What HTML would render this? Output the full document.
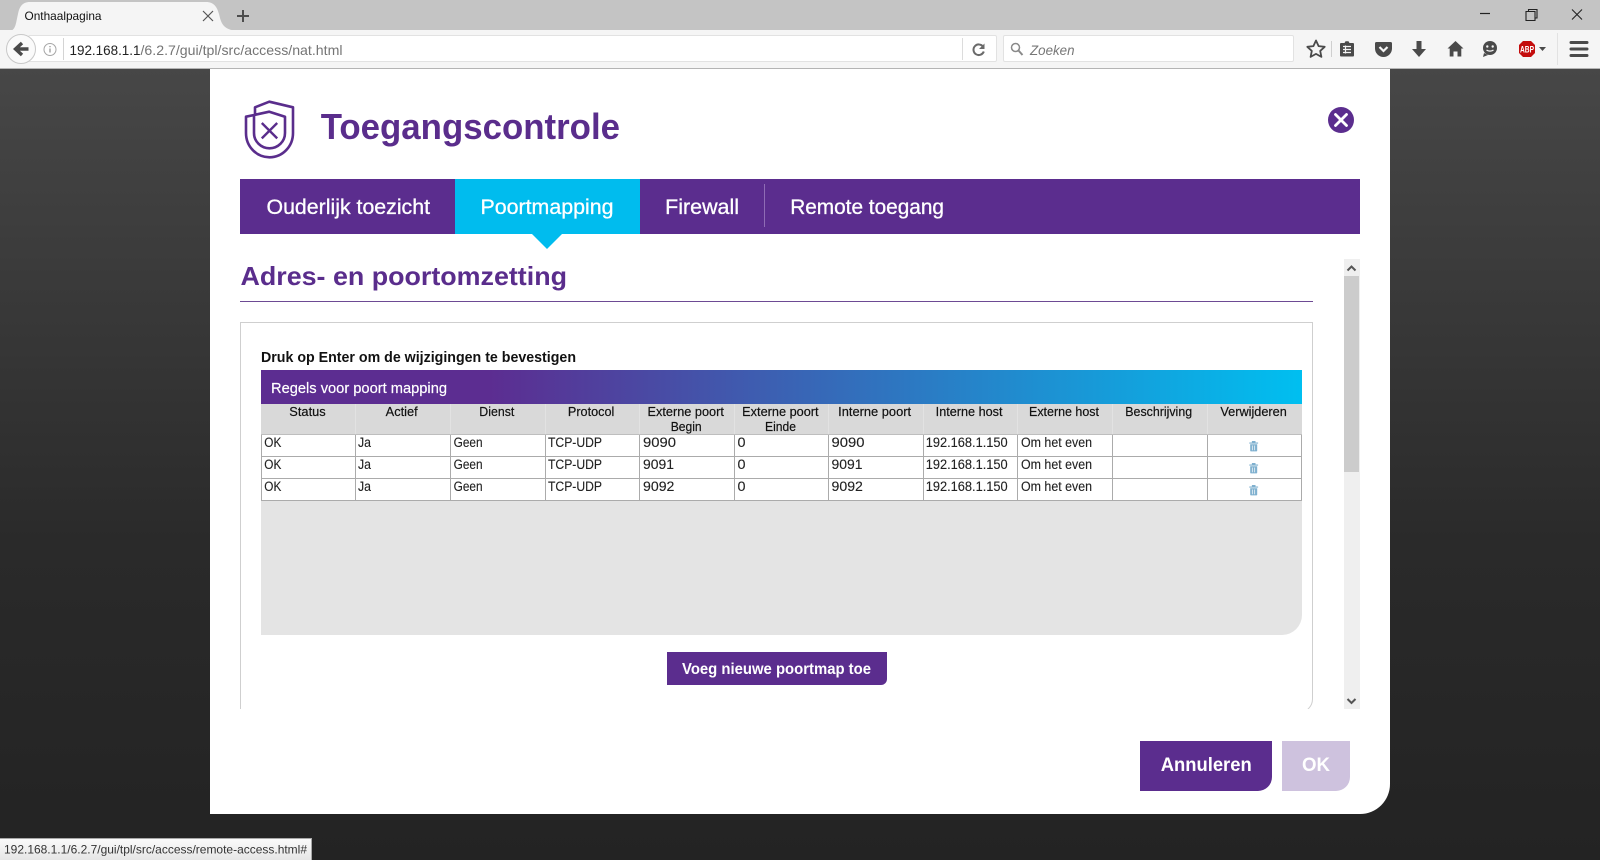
<!DOCTYPE html>
<html lang="nl"><head><meta charset="utf-8"><title>Onthaalpagina</title>
<style>
html,body{margin:0;padding:0;width:1600px;height:860px;overflow:hidden;background:#232323}
body{position:relative;font-family:"Liberation Sans",sans-serif}
div{position:absolute;box-sizing:border-box}
#bg{left:0;top:68px;width:1600px;height:792px;background:linear-gradient(#474747 0,#2a2a2a 60%,#232323 100%)}
#tabs{left:0;top:0;width:1600px;height:30px;background:#c4c4c4}
#nav{left:0;top:30px;width:1600px;height:39px;background:#f5f5f5;border-bottom:1px solid #b4b4b4}
#addr{left:28px;top:35px;width:969px;height:27px;background:#fff;border:1px solid #e2e2e2;border-radius:2px}
#search{left:1003px;top:35px;width:291px;height:27px;background:#fff;border:1px solid #e2e2e2;border-radius:2px}
#back{left:6px;top:34px;width:30px;height:30px;border-radius:50%;background:#fafafa;border:1px solid #c8c8c8}
#modal{left:210px;top:69px;width:1180px;height:745px;background:#fff;border-radius:0 0 30px 0}
#tabbar{left:240px;top:179px;width:1120px;height:55px;background:#5b2d8e}
#active{left:455px;top:179px;width:185px;height:55px;background:#00bcee}
#tsep{left:764px;top:184px;width:1px;height:43px;background:#8f6cb5}
#arrow{left:532px;top:234px;width:0;height:0;border-left:15px solid transparent;border-right:15px solid transparent;border-top:15px solid #00bcee}
#hr{left:240px;top:301px;width:1073px;height:1px;background:#6d4a94}
#clip{left:240px;top:322px;width:1073px;height:387px;overflow:hidden}
#box{left:0;top:0;width:1073px;height:391px;border:1px solid #cfcfcf;border-radius:0 0 14px 0;background:#fff}
#band{left:261px;top:370px;width:1041px;height:34px;background:linear-gradient(90deg,#5c2d91 0,#5c2d91 22%,#00bff0 100%)}
#panel{left:261px;top:404px;width:1041px;height:231px;background:#e4e4e4;border-radius:0 0 20px 0}
#head{left:261px;top:404px;width:1041px;height:31px;background:#d9d9d9}
.v{width:1px;background:#e2e2e2;top:404px;height:31px}
.l{background:#ababab}
#cells{left:261px;top:435px;width:1041px;height:66px;background:#fff}
#scroll{left:1344px;top:259px;width:16px;height:450px;background:#efefef}
#thumb{left:1344px;top:276px;width:15px;height:196px;background:#ccc}
#add{left:667px;top:652px;width:220px;height:33px;background:#5b2d8e;border-radius:0 0 6px 0}
#cancel{left:1140px;top:741px;width:132px;height:50px;background:#5b2d8e;border-radius:0 0 14px 0}
#ok{left:1282px;top:741px;width:68px;height:50px;background:#cec2de;border-radius:0 0 14px 0}
#status{left:0;top:838px;width:312px;height:22px;background:linear-gradient(#fafafa,#e6e6e6);border-top:1px solid #a8a8a8;border-right:1px solid #a8a8a8}
svg#s{position:absolute;left:0;top:0}
.tb{fill:#fff;font-size:21px;stroke:#fff;stroke-width:.3px}
.h{fill:#111;font-size:12.5px;stroke:#111;stroke-width:.18px}
.c{fill:#222;font-size:13.5px;stroke:#222;stroke-width:.12px}
.pu{fill:#5a2d8c;font-weight:bold}
.ic{fill:#4a4a4a}
</style></head><body>
<div id="bg"></div>
<div id="tabs"></div><div id="nav"></div>
<svg style="position:absolute;left:0;top:0" width="260" height="32"><path d="M10 31C16 30 16 22 18 14C19.500 7 22 2 30 2H206C214 2 217 7 219 14C221 22 222 30 238 31Z" fill="#f5f5f5"/></svg>
<div id="addr"></div><div id="search"></div><div id="back"></div>
<div id="modal"></div>
<div id="tabbar"></div><div id="active"></div><div id="tsep"></div><div id="arrow"></div>
<div id="hr"></div>
<div id="clip"><div id="box"></div></div>
<div id="band"></div><div id="panel"></div><div id="head"></div><div id="cells"></div>
<div class="v" style="left:355px"></div><div class="v" style="left:450px"></div><div class="v" style="left:545px"></div><div class="v" style="left:639px"></div><div class="v" style="left:734px"></div><div class="v" style="left:828px"></div><div class="v" style="left:923px"></div><div class="v" style="left:1017px"></div><div class="v" style="left:1112px"></div><div class="v" style="left:1207px"></div>
<div class="l" style="left:261px;top:434px;width:1041px;height:1px;opacity:.6"></div>
<div class="l" style="left:261px;top:456px;width:1041px;height:1px"></div>
<div class="l" style="left:261px;top:478px;width:1041px;height:1px"></div>
<div class="l" style="left:261px;top:500px;width:1041px;height:1px"></div>
<div class="l" style="left:261px;top:435px;width:1px;height:66px"></div>
<div class="l" style="left:355px;top:435px;width:1px;height:66px"></div>
<div class="l" style="left:450px;top:435px;width:1px;height:66px"></div>
<div class="l" style="left:545px;top:435px;width:1px;height:66px"></div>
<div class="l" style="left:639px;top:435px;width:1px;height:66px"></div>
<div class="l" style="left:734px;top:435px;width:1px;height:66px"></div>
<div class="l" style="left:828px;top:435px;width:1px;height:66px"></div>
<div class="l" style="left:923px;top:435px;width:1px;height:66px"></div>
<div class="l" style="left:1017px;top:435px;width:1px;height:66px"></div>
<div class="l" style="left:1112px;top:435px;width:1px;height:66px"></div>
<div class="l" style="left:1207px;top:435px;width:1px;height:66px"></div>
<div class="l" style="left:1301px;top:435px;width:1px;height:66px"></div>
<div id="scroll"></div><div id="thumb"></div>
<div id="add"></div><div id="cancel"></div><div id="ok"></div>
<div id="status"></div>
<svg id="s" width="1600" height="860" viewBox="0 0 1600 860" xmlns="http://www.w3.org/2000/svg" font-family="'Liberation Sans',sans-serif">
<!-- chrome -->
<text x="24.500" y="20" font-size="12" fill="#111" textLength="77" lengthAdjust="spacingAndGlyphs">Onthaalpagina</text>
<path d="M203 11l10 10M213 11l-10 10" stroke="#555" stroke-width="1.200" fill="none"/>
<path d="M243 10v12M237 16h12" stroke="#4d4d4d" stroke-width="2" fill="none"/>
<path d="M1480 13.500h10" stroke="#222" stroke-width="1.200"/>
<path d="M1526 11.500h9v9h-9zM1528.500 11.500v-2h8.500v8.500h-2" stroke="#222" stroke-width="1.100" fill="none"/>
<path d="M1572 9.500l10 10M1582 9.500l-10 10" stroke="#222" stroke-width="1.100" fill="none"/>
<path d="M28.500 49H17M22 43l-6.500 6 6.500 6" stroke="#4a4a4a" stroke-width="3.400" fill="none"/>
<circle cx="50" cy="49.500" r="6" fill="none" stroke="#a6a6a6" stroke-width="1"/><path d="M50 48.500v4M50 46v1.200" stroke="#999" stroke-width="1.300"/>
<path d="M63.500 38v22" stroke="#d4d4d4"/>
<text x="69.500" y="55" font-size="14" fill="#222" textLength="71" lengthAdjust="spacingAndGlyphs">192.168.1.1</text>
<text x="140.500" y="55" font-size="14" fill="#757575" textLength="202" lengthAdjust="spacingAndGlyphs">/6.2.7/gui/tpl/src/access/nat.html</text>
<path d="M962.500 38v22" stroke="#dcdcdc"/>
<path d="M983 46.500a5.300 5.300 0 1 0 .8 5" stroke="#6a6a6a" stroke-width="2" fill="none"/><path d="M984.500 43.500v5.500h-5.500z" fill="#6a6a6a"/>
<circle cx="1015.500" cy="47.500" r="4" fill="none" stroke="#8a8a8a" stroke-width="1.500"/><path d="M1018.500 50.500l4 4.500" stroke="#8a8a8a" stroke-width="2"/>
<text x="1030" y="55" font-size="14" font-style="italic" fill="#777" textLength="44.500" lengthAdjust="spacingAndGlyphs">Zoeken</text>
<path d="M1316 40.500l2.600 5.600 6.100.7-4.500 4.100 1.200 6-5.400-3-5.400 3 1.200-6-4.500-4.100 6.100-.7z" fill="none" stroke="#4a4a4a" stroke-width="1.800" stroke-linejoin="round"/>
<path d="M1331.500 41v16" stroke="#cfcfcf"/>
<path class="ic" d="M1341 43h3.500l1-1.800h3l1 1.800h3.500a1 1 0 0 1 1 1v11.500a1 1 0 0 1-1 1H1341a1 1 0 0 1-1-1V44a1 1 0 0 1 1-1z"/>
<path d="M1343 46.500h8M1343 49.500h8M1343 52.500h8M1345.500 45.500v8" stroke="#f5f5f5" stroke-width="1.200"/>
<path class="ic" d="M1376.500 42h14a1.500 1.500 0 0 1 1.500 1.500v5a8.500 8.500 0 0 1-17 0v-5a1.500 1.500 0 0 1 1.500-1.500z"/>
<path d="M1379.500 47l4 4 4-4" stroke="#f5f5f5" stroke-width="2.200" fill="none"/>
<path class="ic" d="M1416.500 41h5v8h4.500l-7 8-7-8h4.500z"/>
<path class="ic" d="M1455.500 41l8 7.500h-2.200v8h-3.800v-5h-4v5h-3.800v-8h-2.200z"/>
<circle cx="1490" cy="48" r="7" class="ic"/><path class="ic" d="M1484 53l-1 4 5-2z"/>
<circle cx="1487.300" cy="46.500" r="1.200" fill="#f5f5f5"/><circle cx="1492.700" cy="46.500" r="1.200" fill="#f5f5f5"/><path d="M1486.500 50c2 1.500 5 1.500 7 0" stroke="#f5f5f5" stroke-width="1.200" fill="none"/>
<path d="M1523 41h8l4 4v8l-4 4h-8l-4-4v-8z" fill="#c40d0d"/>
<text x="1520" y="52.500" font-size="9" font-weight="bold" fill="#fff" textLength="14" lengthAdjust="spacingAndGlyphs">ABP</text>
<path class="ic" d="M1539 47h7l-3.500 4z"/>
<path d="M1557.500 33v32" stroke="#e2e2e2"/>
<path d="M1571 42.500h16M1571 49h16M1571 55.500h16" stroke="#4a4a4a" stroke-width="3" stroke-linecap="round"/>
<!-- header -->
<path d="M255 114.800V107.300L269.300 101.700L293 107.300V133C293 146.500 282.500 157.300 269.500 157.300S246 146.500 246 133V116.700L269.300 111.700L285 116.700V133C285 141.500 278 148.300 269.500 148.300S254 141.500 254 133V115" fill="none" stroke="#5a2d8c" stroke-width="2.600" stroke-linejoin="round"/>
<path d="M261.800 123l15.400 15.400M277.200 123l-15.400 15.400" stroke="#5a2d8c" stroke-width="2.400"/>
<text x="320.700" y="139" font-size="36" class="pu" textLength="299.300" lengthAdjust="spacingAndGlyphs">Toegangscontrole</text>
<circle cx="1341" cy="120" r="13" fill="#5b2d8e"/><path d="M1335.500 114.500l11 11M1346.500 114.500l-11 11" stroke="#fff" stroke-width="2.800" stroke-linecap="round"/>
<text x="266.500" y="214" class="tb" textLength="163.500" lengthAdjust="spacingAndGlyphs">Ouderlijk toezicht</text>
<text x="480.500" y="214" class="tb" textLength="133" lengthAdjust="spacingAndGlyphs">Poortmapping</text>
<text x="665.200" y="214" class="tb" textLength="73.800" lengthAdjust="spacingAndGlyphs">Firewall</text>
<text x="790.200" y="214" class="tb" textLength="153.800" lengthAdjust="spacingAndGlyphs">Remote toegang</text>
<text x="240.500" y="285" font-size="26" class="pu" textLength="326.500" lengthAdjust="spacingAndGlyphs">Adres- en poortomzetting</text>
<text x="261" y="362" font-size="14.500" font-weight="bold" fill="#111" textLength="315" lengthAdjust="spacingAndGlyphs">Druk op Enter om de wijzigingen te bevestigen</text>
<text x="271" y="393" font-size="15" fill="#fff" stroke="#fff" stroke-width=".2" textLength="176" lengthAdjust="spacingAndGlyphs">Regels voor poort mapping</text>
<!-- table head -->
<text class="h" x="289.300" y="416" textLength="36.400" lengthAdjust="spacingAndGlyphs">Status</text>
<text class="h" x="385.700" y="416" textLength="32" lengthAdjust="spacingAndGlyphs">Actief</text>
<text class="h" x="479.300" y="416" textLength="35" lengthAdjust="spacingAndGlyphs">Dienst</text>
<text class="h" x="567.900" y="416" textLength="46.400" lengthAdjust="spacingAndGlyphs">Protocol</text>
<text class="h" x="647.500" y="416" textLength="76.400" lengthAdjust="spacingAndGlyphs">Externe poort</text>
<text class="h" x="670.700" y="431" textLength="31" lengthAdjust="spacingAndGlyphs">Begin</text>
<text class="h" x="742.200" y="416" textLength="76.400" lengthAdjust="spacingAndGlyphs">Externe poort</text>
<text class="h" x="765" y="431" textLength="31" lengthAdjust="spacingAndGlyphs">Einde</text>
<text class="h" x="838.200" y="416" textLength="72.900" lengthAdjust="spacingAndGlyphs">Interne poort</text>
<text class="h" x="935.700" y="416" textLength="66.800" lengthAdjust="spacingAndGlyphs">Interne host</text>
<text class="h" x="1029" y="416" textLength="70" lengthAdjust="spacingAndGlyphs">Externe host</text>
<text class="h" x="1125.300" y="416" textLength="66.800" lengthAdjust="spacingAndGlyphs">Beschrijving</text>
<text class="h" x="1220.400" y="416" textLength="66.400" lengthAdjust="spacingAndGlyphs">Verwijderen</text>
<!-- rows -->
<text class="c" x="264.300" y="447" textLength="17" lengthAdjust="spacingAndGlyphs">OK</text><text class="c" x="358" y="447" textLength="13" lengthAdjust="spacingAndGlyphs">Ja</text><text class="c" x="453.600" y="447" textLength="29" lengthAdjust="spacingAndGlyphs">Geen</text><text class="c" x="548" y="447" textLength="54" lengthAdjust="spacingAndGlyphs">TCP-UDP</text><text class="c" x="643" y="447" textLength="33" lengthAdjust="spacingAndGlyphs">9090</text><text class="c" x="737.500" y="447" textLength="8" lengthAdjust="spacingAndGlyphs">0</text><text class="c" x="831.500" y="447" textLength="33" lengthAdjust="spacingAndGlyphs">9090</text><text class="c" x="925.700" y="447" textLength="82" lengthAdjust="spacingAndGlyphs">192.168.1.150</text><text class="c" x="1021" y="447" textLength="71" lengthAdjust="spacingAndGlyphs">Om het even</text>
<text class="c" x="264.300" y="469" textLength="17" lengthAdjust="spacingAndGlyphs">OK</text><text class="c" x="358" y="469" textLength="13" lengthAdjust="spacingAndGlyphs">Ja</text><text class="c" x="453.600" y="469" textLength="29" lengthAdjust="spacingAndGlyphs">Geen</text><text class="c" x="548" y="469" textLength="54" lengthAdjust="spacingAndGlyphs">TCP-UDP</text><text class="c" x="643" y="469" textLength="31" lengthAdjust="spacingAndGlyphs">9091</text><text class="c" x="737.500" y="469" textLength="8" lengthAdjust="spacingAndGlyphs">0</text><text class="c" x="831.500" y="469" textLength="31" lengthAdjust="spacingAndGlyphs">9091</text><text class="c" x="925.700" y="469" textLength="82" lengthAdjust="spacingAndGlyphs">192.168.1.150</text><text class="c" x="1021" y="469" textLength="71" lengthAdjust="spacingAndGlyphs">Om het even</text>
<text class="c" x="264.300" y="491" textLength="17" lengthAdjust="spacingAndGlyphs">OK</text><text class="c" x="358" y="491" textLength="13" lengthAdjust="spacingAndGlyphs">Ja</text><text class="c" x="453.600" y="491" textLength="29" lengthAdjust="spacingAndGlyphs">Geen</text><text class="c" x="548" y="491" textLength="54" lengthAdjust="spacingAndGlyphs">TCP-UDP</text><text class="c" x="643" y="491" textLength="31.400" lengthAdjust="spacingAndGlyphs">9092</text><text class="c" x="737.500" y="491" textLength="8" lengthAdjust="spacingAndGlyphs">0</text><text class="c" x="831.500" y="491" textLength="31.400" lengthAdjust="spacingAndGlyphs">9092</text><text class="c" x="925.700" y="491" textLength="82" lengthAdjust="spacingAndGlyphs">192.168.1.150</text><text class="c" x="1021" y="491" textLength="71" lengthAdjust="spacingAndGlyphs">Om het even</text>
<!-- trash icons -->
<g fill="#7fb0cf">
<path d="M1249.300 442.500h8.800v1.100h-8.800zM1251.900 441h3.600v1.500h-3.600zM1250.200 444.300h7v6.300a.8.800 0 0 1-.8.800h-5.400a.8.800 0 0 1-.8-.8z"/>
<path d="M1249.300 464.500h8.800v1.100h-8.800zM1251.900 463h3.600v1.500h-3.600zM1250.200 466.300h7v6.300a.8.800 0 0 1-.8.800h-5.400a.8.800 0 0 1-.8-.8z"/>
<path d="M1249.300 486.500h8.800v1.100h-8.800zM1251.900 485h3.600v1.500h-3.600zM1250.200 488.300h7v6.300a.8.800 0 0 1-.8.800h-5.400a.8.800 0 0 1-.8-.8z"/>
</g>
<path d="M1252.300 445.500v4.800M1254.700 445.500v4.800M1252.300 467.500v4.800M1254.700 467.500v4.800M1252.300 489.500v4.800M1254.700 489.500v4.800" stroke="#fff" stroke-width=".7"/>
<path d="M1347.500 270.500l4-4 4 4M1347.500 699l4 4 4-4" stroke="#555" stroke-width="2" fill="none"/>
<text x="682" y="674" font-size="15.500" font-weight="bold" fill="#fff" textLength="189" lengthAdjust="spacingAndGlyphs">Voeg nieuwe poortmap toe</text>
<text x="1160.700" y="771" font-size="19" font-weight="bold" fill="#fff" textLength="91" lengthAdjust="spacingAndGlyphs">Annuleren</text>
<text x="1302" y="771" font-size="19" font-weight="bold" fill="#fff" textLength="28" lengthAdjust="spacingAndGlyphs">OK</text>
<text x="4" y="853.500" font-size="12" fill="#333" textLength="303" lengthAdjust="spacingAndGlyphs">192.168.1.1/6.2.7/gui/tpl/src/access/remote-access.html#</text>
</svg>
</body></html>
